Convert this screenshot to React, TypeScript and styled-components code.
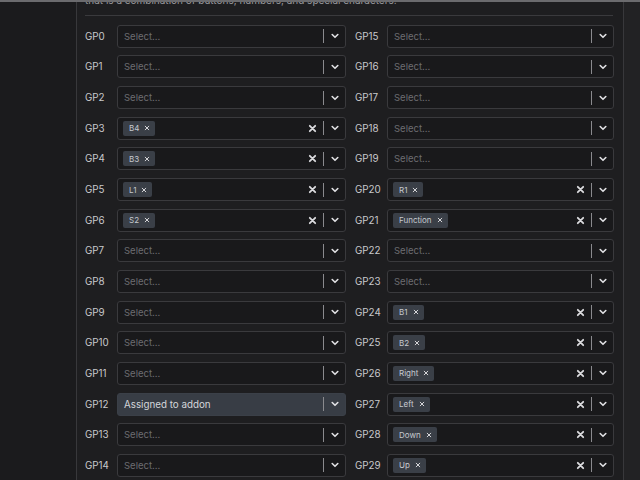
import styled, { createGlobalStyle } from 'styled-components';

interface PinRow {
  pin: string;
  values?: string[];
  disabled?: string;
}

const GlobalStyle = createGlobalStyle`
  html, body {
    margin: 0;
    padding: 0;
    background: #1a1a1c;
    overflow: hidden;
  }
  body {
    font-family: Inter, "Open Sans", Arial, sans-serif;
  }
`;

const Page = styled.div`
  display: flex;
  width: 640px;
  height: 480px;
  border-top: 2px solid #6b6b6e;
  box-sizing: border-box;
  overflow: hidden;
`;

const Sidebar = styled.aside`
  width: 76px;
  flex: none;
  background: #1b1b1d;
  border-right: 1px solid #38383b;
`;

const Panel = styled.main`
  width: 547px;
  flex: none;
  background: #1e1e20;
  border-right: 1px solid #38383b;
  padding: 0 10px 0 8px;
  box-sizing: border-box;
`;

const Gutter = styled.div`
  flex: 1;
  background: #222224;
`;

const Intro = styled.p`
  margin: -8px 0 0;
  color: #9a9a9e;
  font-size: 10px;
  line-height: 13px;
  white-space: nowrap;
`;

const Divider = styled.hr`
  margin: 8px 0 5px;
  border: 0;
  border-top: 1px solid #3a3a3d;
`;

const Columns = styled.div`
  display: grid;
  grid-template-columns: 261px 259px;
  column-gap: 9px;
`;

const Column = styled.div`
  display: grid;
  grid-auto-rows: 30.65px;
`;

const Row = styled.div`
  display: flex;
  align-items: center;
`;

const Label = styled.span`
  width: 32px;
  flex: none;
  color: #c9c9cc;
  font-size: 9.8px;
`;

const Control = styled.div<{ $disabled?: boolean }>`
  flex: 1;
  height: 23px;
  display: flex;
  align-items: center;
  box-sizing: border-box;
  border: 1px solid ${({ $disabled }) => ($disabled ? '#3b4048' : '#3a3a3d')};
  border-radius: 3px;
  background: ${({ $disabled }) => ($disabled ? '#383d45' : '#19191b')};
`;

const ValueArea = styled.div`
  flex: 1;
  display: flex;
  align-items: center;
  gap: 4px;
  padding-left: 5px;
  min-width: 0;
`;

const Placeholder = styled.span`
  color: #6c6c70;
  font-size: 9.5px;
  padding-left: 1px;
`;

const DisabledText = styled.span`
  color: #d4d6da;
  font-size: 9.8px;
  padding-left: 1px;
`;

const Chip = styled.span`
  display: inline-flex;
  align-items: center;
  gap: 5px;
  height: 15px;
  padding: 0 5px 0 6px;
  border-radius: 2px;
  background: #3a3f47;
  color: #c6cad0;
  font-size: 8px;
`;

const Indicators = styled.div`
  display: flex;
  align-items: center;
  height: 100%;
`;

const ClearButton = styled.span`
  display: flex;
  align-items: center;
  justify-content: center;
  width: 10px;
  margin-right: 6px;
`;

const Separator = styled.span`
  width: 1px;
  height: 14px;
  background: #8a8a8e;
`;

const Chevron = styled.span`
  display: flex;
  align-items: center;
  justify-content: center;
  width: 21px;
`;

const Cross = ({ size, weight }: { size: number; weight: number }) => (
  <svg width={size} height={size} viewBox="0 0 10 10">
    <path d="M2 2 L8 8 M8 2 L2 8" stroke="#dcdcdf" strokeWidth={weight} strokeLinecap="round" />
  </svg>
);

const Down = () => (
  <svg width="8" height="6" viewBox="0 0 8 6">
    <path d="M1.2 1.5 L4 4.3 L6.8 1.5" stroke="#e2e2e5" strokeWidth="1.6" fill="none" strokeLinecap="round" strokeLinejoin="round" />
  </svg>
);

const leftPins: PinRow[] = [
  { pin: 'GP0' },
  { pin: 'GP1' },
  { pin: 'GP2' },
  { pin: 'GP3', values: ['B4'] },
  { pin: 'GP4', values: ['B3'] },
  { pin: 'GP5', values: ['L1'] },
  { pin: 'GP6', values: ['S2'] },
  { pin: 'GP7' },
  { pin: 'GP8' },
  { pin: 'GP9' },
  { pin: 'GP10' },
  { pin: 'GP11' },
  { pin: 'GP12', disabled: 'Assigned to addon' },
  { pin: 'GP13' },
  { pin: 'GP14' },
];

const rightPins: PinRow[] = [
  { pin: 'GP15' },
  { pin: 'GP16' },
  { pin: 'GP17' },
  { pin: 'GP18' },
  { pin: 'GP19' },
  { pin: 'GP20', values: ['R1'] },
  { pin: 'GP21', values: ['Function'] },
  { pin: 'GP22' },
  { pin: 'GP23' },
  { pin: 'GP24', values: ['B1'] },
  { pin: 'GP25', values: ['B2'] },
  { pin: 'GP26', values: ['Right'] },
  { pin: 'GP27', values: ['Left'] },
  { pin: 'GP28', values: ['Down'] },
  { pin: 'GP29', values: ['Up'] },
];

const PinSelect = ({ row }: { row: PinRow }) => {
  const hasValues = !!row.values && row.values.length > 0;
  return (
    <Control $disabled={!!row.disabled}>
      <ValueArea>
        {row.disabled ? (
          <DisabledText>{row.disabled}</DisabledText>
        ) : hasValues ? (
          row.values!.map((v) => (
            <Chip key={v}>
              {v}
              <Cross size={6} weight={1.6} />
            </Chip>
          ))
        ) : (
          <Placeholder>Select...</Placeholder>
        )}
      </ValueArea>
      <Indicators>
        {hasValues && (
          <ClearButton>
            <Cross size={9} weight={2} />
          </ClearButton>
        )}
        <Separator />
        <Chevron>
          <Down />
        </Chevron>
      </Indicators>
    </Control>
  );
};

const PinColumn = ({ rows }: { rows: PinRow[] }) => (
  <Column>
    {rows.map((row) => (
      <Row key={row.pin}>
        <Label>{row.pin}</Label>
        <PinSelect row={row} />
      </Row>
    ))}
  </Column>
);

const App = () => {
  return (
    <>
      <GlobalStyle />
      <Page>
        <Sidebar />
        <Panel>
          <Intro>that is a combination of buttons, numbers, and special characters.</Intro>
          <Divider />
          <Columns>
            <PinColumn rows={leftPins} />
            <PinColumn rows={rightPins} />
          </Columns>
        </Panel>
        <Gutter />
      </Page>
    </>
  );
};

export default App;
